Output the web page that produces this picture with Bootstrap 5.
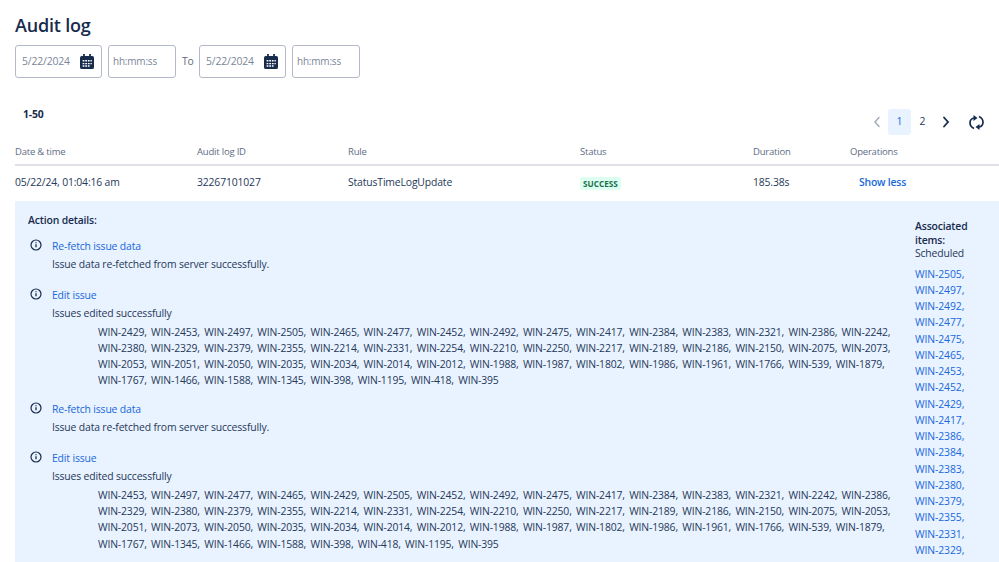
<!DOCTYPE html>
<html lang="en"><head><meta charset="utf-8"><title>Audit log</title>
<link href="https://cdn.jsdelivr.net/npm/bootstrap@5.3.0/dist/css/bootstrap.min.css" rel="stylesheet">
<style>
html,body{height:562px;overflow:hidden}
body{font-family:"Open Sans","Noto Sans","Liberation Sans",sans-serif;font-size:10.4px;color:#253858;background:#fff;letter-spacing:-.15px}
.page-wrap{padding:14px 0 0 15px}
.page-title{font-size:18px;font-weight:600;line-height:22px;margin:0 0 9px;letter-spacing:-.2px;color:#172b4d}
.filter-row{gap:6px;height:33px}
.field-box{height:33px;border:1px solid #b3b9c9;border-radius:3px;color:#7a869a;padding:0 7px 0 6px;font-size:10.4px}
.date-box{width:87px}.time-box{width:68px;padding:0 4px;font-size:10px;letter-spacing:-.2px}
.to-label{width:11px;text-align:center;color:#5e6c84}
.range-label{font-weight:700;font-size:10.4px;padding-left:8px;line-height:14px;margin-top:29px;color:#172b4d}
.pager{height:26px;margin-top:-12px;padding-right:11px}
.pg-item{width:23px;height:26px;border-radius:3px;display:flex;align-items:center;justify-content:center;font-size:10.4px}
.pg-active{background:#e9f2ff;color:#0c66e4}
.pg-refresh{margin-left:8px}
.log-table{display:grid;grid-template-columns:182px 151px 232px 173px 97px 1fr}
.head-row{border-bottom:2px solid #dfe1e6;height:31px;color:#5e6c84;font-size:9.5px;line-height:34px;font-weight:500;letter-spacing:-.2px}
.body-row{height:35px;line-height:33px}
.ok-pill{display:inline-block;line-height:13px;background:#dcfff1;color:#216e4e;font-size:8.2px;font-weight:700;padding:0 3px;border-radius:2px;vertical-align:middle;letter-spacing:0}
.blue-link{color:#1868db;text-decoration:none;font-weight:500;letter-spacing:-.15px}
.show-link{padding-left:9px}
.show-link .blue-link{font-weight:600;letter-spacing:-.2px}
.detail-panel{background:#e9f2ff;height:361px;padding:12px 0 0 13px;overflow:hidden}
.detail-main{width:887px;flex:none}
.panel-title{font-weight:600;line-height:14px;margin-bottom:11px;color:#172b4d}
.action-item{margin-bottom:15px;gap:9px;padding-left:2px}
.action-item.has-keys{margin-bottom:12.500px}
.action-icon{width:13px;flex:none;padding-top:1px;line-height:0}
.action-name{line-height:16px;margin-bottom:2px}
.action-msg{line-height:16px}
.key-list{line-height:16.200px;padding-left:46px;margin-top:2.800px;word-spacing:1.800px;white-space:nowrap}
.assoc-col{width:70px;flex:none;line-height:13.500px;padding-top:7px}
.assoc-head{font-weight:600;color:#172b4d}
.assoc-sub{margin-bottom:5px}
.assoc-list a{display:block;line-height:16.250px;font-weight:400;letter-spacing:-.1px}
</style></head><body>
<div class="page-wrap">
<h1 class="page-title">Audit log</h1>
<div class="d-flex align-items-center filter-row">
  <div class="field-box date-box d-flex align-items-center justify-content-between"><span>5/22/2024</span>
    <svg width="14" height="15" viewBox="0 0 16 16" preserveAspectRatio="none" aria-hidden="true"><path fill="#172b4d" d="M3.500 0h2v2h5V0h2v2H14a2 2 0 0 1 2 2v10a2 2 0 0 1-2 2H2a2 2 0 0 1-2-2V4a2 2 0 0 1 2-2h1.500z"/><path fill="#fff" d="M3 6.500h2V8H3zM6 6.500h2V8H6zM9 6.500h2V8H9zM12 6.500h1.500V8H12zM3 9.500h2V11H3zM6 9.500h2V11H6zM9 9.500h2V11H9zM12 9.500h1.500V11H12zM3 12h2v1.500H3zM6 12h2v1.500H6zM9 12h2v1.500H9z"/></svg></div>
  <div class="field-box time-box d-flex align-items-center">hh:mm:ss</div>
  <span class="to-label">To</span>
  <div class="field-box date-box d-flex align-items-center justify-content-between"><span>5/22/2024</span>
    <svg width="14" height="15" viewBox="0 0 16 16" preserveAspectRatio="none" aria-hidden="true"><path fill="#172b4d" d="M3.500 0h2v2h5V0h2v2H14a2 2 0 0 1 2 2v10a2 2 0 0 1-2 2H2a2 2 0 0 1-2-2V4a2 2 0 0 1 2-2h1.500z"/><path fill="#fff" d="M3 6.500h2V8H3zM6 6.500h2V8H6zM9 6.500h2V8H9zM12 6.500h1.500V8H12zM3 9.500h2V11H3zM6 9.500h2V11H6zM9 9.500h2V11H9zM12 9.500h1.500V11H12zM3 12h2v1.500H3zM6 12h2v1.500H6zM9 12h2v1.500H9z"/></svg></div>
  <div class="field-box time-box d-flex align-items-center">hh:mm:ss</div>
</div>
<div class="range-label">1-50</div>
<div class="d-flex justify-content-end align-items-center pager">
  <span class="pg-item"><svg width="8" height="12" viewBox="0 0 8 12"><path d="M6 1.500 2 6l4 4.500" fill="none" stroke="#a5adba" stroke-width="1.500" stroke-linecap="round"/></svg></span>
  <span class="pg-item pg-active">1</span>
  <span class="pg-item">2</span>
  <span class="pg-item"><svg width="8" height="12" viewBox="0 0 8 12"><path d="M2 1.500 6 6l-4 4.500" fill="none" stroke="#172b4d" stroke-width="1.800" stroke-linecap="round"/></svg></span>
  <span class="pg-item pg-refresh"><svg width="15" height="15" viewBox="0 0 15 15"><g fill="none" stroke="#172b4d" stroke-width="1.700"><path d="M5 13.500C2.800 12.500 1 10.500 1 7.800 1 5.500 2.500 3.500 5 3"/><path d="M10 1.500c2.200 1 4 3 4 5.700 0 2.300-1.500 4.300-4 4.800"/></g><path fill="#172b4d" d="M4.500 0v6l4-3zM10.500 9v6l-4-3z"/></svg></span>
</div>
<div class="log-table head-row"><div>Date &amp; time</div><div>Audit log ID</div><div>Rule</div><div>Status</div><div>Duration</div><div>Operations</div></div>
<div class="log-table body-row"><div>05/22/24, 01:04:16 am</div><div>32267101027</div><div>StatusTimeLogUpdate</div><div><span class="ok-pill">SUCCESS</span></div><div>185.38s</div><div class="show-link"><a class="blue-link" href="#">Show less</a></div></div>
<div class="detail-panel d-flex">
  <div class="detail-main">
    <div class="panel-title">Action details:</div>
    <div class="d-flex action-item"><div class="action-icon"><svg width="12" height="12" viewBox="0 0 12 12"><circle cx="6" cy="6" r="5" fill="none" stroke="#172b4d" stroke-width="1.200"/><path d="M6 5.300v3M6 3.300v1" stroke="#172b4d" stroke-width="1.300"/></svg></div><div><div class="action-name"><a class="blue-link" href="#">Re-fetch issue data</a></div><div class="action-msg">Issue data re-fetched from server successfully.</div></div></div>
    <div class="d-flex action-item has-keys"><div class="action-icon"><svg width="12" height="12" viewBox="0 0 12 12"><circle cx="6" cy="6" r="5" fill="none" stroke="#172b4d" stroke-width="1.200"/><path d="M6 5.300v3M6 3.300v1" stroke="#172b4d" stroke-width="1.300"/></svg></div><div><div class="action-name"><a class="blue-link" href="#">Edit issue</a></div><div class="action-msg">Issues edited successfully</div><div class="key-list">WIN-2429, WIN-2453, WIN-2497, WIN-2505, WIN-2465, WIN-2477, WIN-2452, WIN-2492, WIN-2475, WIN-2417, WIN-2384, WIN-2383, WIN-2321, WIN-2386, WIN-2242,<br>WIN-2380, WIN-2329, WIN-2379, WIN-2355, WIN-2214, WIN-2331, WIN-2254, WIN-2210, WIN-2250, WIN-2217, WIN-2189, WIN-2186, WIN-2150, WIN-2075, WIN-2073,<br>WIN-2053, WIN-2051, WIN-2050, WIN-2035, WIN-2034, WIN-2014, WIN-2012, WIN-1988, WIN-1987, WIN-1802, WIN-1986, WIN-1961, WIN-1766, WIN-539, WIN-1879,<br>WIN-1767, WIN-1466, WIN-1588, WIN-1345, WIN-398, WIN-1195, WIN-418, WIN-395</div></div></div>
    <div class="d-flex action-item"><div class="action-icon"><svg width="12" height="12" viewBox="0 0 12 12"><circle cx="6" cy="6" r="5" fill="none" stroke="#172b4d" stroke-width="1.200"/><path d="M6 5.300v3M6 3.300v1" stroke="#172b4d" stroke-width="1.300"/></svg></div><div><div class="action-name"><a class="blue-link" href="#">Re-fetch issue data</a></div><div class="action-msg">Issue data re-fetched from server successfully.</div></div></div>
    <div class="d-flex action-item has-keys"><div class="action-icon"><svg width="12" height="12" viewBox="0 0 12 12"><circle cx="6" cy="6" r="5" fill="none" stroke="#172b4d" stroke-width="1.200"/><path d="M6 5.300v3M6 3.300v1" stroke="#172b4d" stroke-width="1.300"/></svg></div><div><div class="action-name"><a class="blue-link" href="#">Edit issue</a></div><div class="action-msg">Issues edited successfully</div><div class="key-list">WIN-2453, WIN-2497, WIN-2477, WIN-2465, WIN-2429, WIN-2505, WIN-2452, WIN-2492, WIN-2475, WIN-2417, WIN-2384, WIN-2383, WIN-2321, WIN-2242, WIN-2386,<br>WIN-2329, WIN-2380, WIN-2379, WIN-2355, WIN-2214, WIN-2331, WIN-2254, WIN-2210, WIN-2250, WIN-2217, WIN-2189, WIN-2186, WIN-2150, WIN-2075, WIN-2053,<br>WIN-2051, WIN-2073, WIN-2050, WIN-2035, WIN-2034, WIN-2014, WIN-2012, WIN-1988, WIN-1987, WIN-1802, WIN-1986, WIN-1961, WIN-1766, WIN-539, WIN-1879,<br>WIN-1767, WIN-1345, WIN-1466, WIN-1588, WIN-398, WIN-418, WIN-1195, WIN-395</div></div></div>
  </div>
  <div class="assoc-col">
    <div class="assoc-head">Associated items:</div><div class="assoc-sub">Scheduled</div>
    <div class="assoc-list"><a href="#" class="blue-link">WIN-2505,</a><a href="#" class="blue-link">WIN-2497,</a><a href="#" class="blue-link">WIN-2492,</a><a href="#" class="blue-link">WIN-2477,</a><a href="#" class="blue-link">WIN-2475,</a><a href="#" class="blue-link">WIN-2465,</a><a href="#" class="blue-link">WIN-2453,</a><a href="#" class="blue-link">WIN-2452,</a><a href="#" class="blue-link">WIN-2429,</a><a href="#" class="blue-link">WIN-2417,</a><a href="#" class="blue-link">WIN-2386,</a><a href="#" class="blue-link">WIN-2384,</a><a href="#" class="blue-link">WIN-2383,</a><a href="#" class="blue-link">WIN-2380,</a><a href="#" class="blue-link">WIN-2379,</a><a href="#" class="blue-link">WIN-2355,</a><a href="#" class="blue-link">WIN-2331,</a><a href="#" class="blue-link">WIN-2329,</a></div>
  </div>
</div>
</div>
<script src="https://cdn.jsdelivr.net/npm/bootstrap@5.3.0/dist/js/bootstrap.bundle.min.js"></script>
</body></html>
